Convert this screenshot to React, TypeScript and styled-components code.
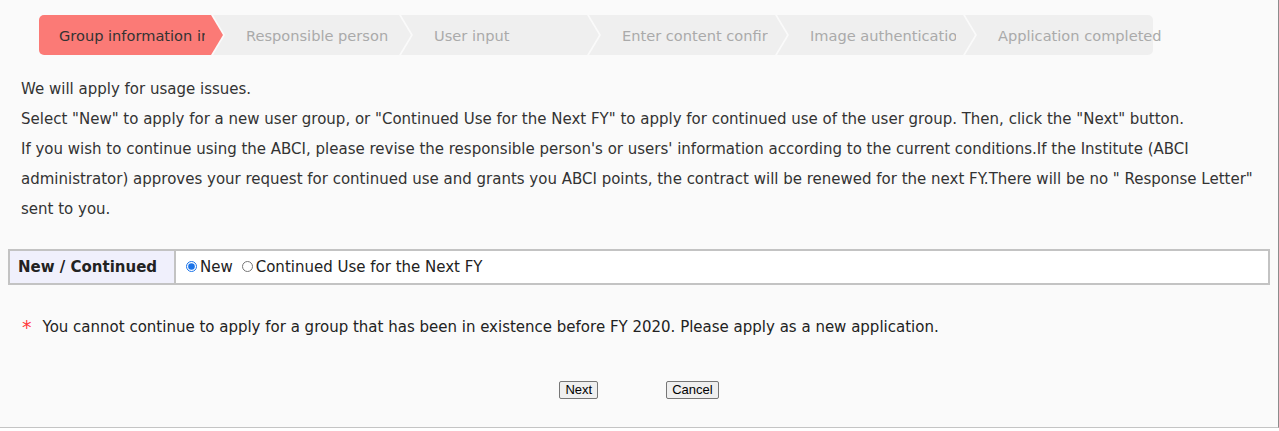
import { FC, useState } from 'react';
import styled, { createGlobalStyle } from 'styled-components';

const steps = [
	'Group information input',
	'Responsible person',
	'User input',
	'Enter content confirmation',
	'Image authentication',
	'Application completed',
];

const App: FC = () => {
	const [kind, setKind] = useState('new');

	return (
		<>
			<GlobalStyle />
			<Page>
				<StepList>
					{steps.map((label, i) => (
						<Step key={label} $index={i} $last={i === steps.length - 1} $active={i === 0}>
							<StepLabel $last={i === steps.length - 1}>{label}</StepLabel>
						</Step>
					))}
				</StepList>

				<Intro>
					<p>We will apply for usage issues.</p>
					<p>
						Select "New" to apply for a new user group, or "Continued Use for the Next FY" to apply for
						continued use of the user group. Then, click the "Next" button.
					</p>
					<p>
						If you wish to continue using the ABCI, please revise the responsible person's or users'
						information according to the current conditions.If the Institute (ABCI administrator)
						approves your request for continued use and grants you ABCI points, the contract will be
						renewed for the next FY.There will be no " Response Letter" sent to you.
					</p>
				</Intro>

				<FormTable>
					<tbody>
						<tr>
							<HeadCell>New / Continued</HeadCell>
							<ValueCell>
								<RadioLabel>
									<Radio
										type="radio"
										name="kind"
										checked={kind === 'new'}
										onChange={() => setKind('new')}
									/>
									New
								</RadioLabel>
								<RadioLabel>
									<Radio
										type="radio"
										name="kind"
										checked={kind === 'continued'}
										onChange={() => setKind('continued')}
									/>
									Continued Use for the Next FY
								</RadioLabel>
							</ValueCell>
						</tr>
					</tbody>
				</FormTable>

				<Notice>
					<Star>*</Star>
					You cannot continue to apply for a group that has been in existence before FY 2020. Please apply
					as a new application.
				</Notice>

				<ButtonRow>
					<Button>Next</Button>
					<Button>Cancel</Button>
				</ButtonRow>
			</Page>
		</>
	);
};

const GlobalStyle = createGlobalStyle`
	html, body {
		margin: 0;
		padding: 0;
		background: #ffffff;
	}
	body {
		font-family: "DejaVu Sans", Verdana, sans-serif;
		color: #333;
	}
`;

const Page = styled.div`
	box-sizing: border-box;
	width: 1279px;
	height: 428px;
	padding: 15px 8px 0;
	background: #fafafa;
	border-right: 1px solid #8c8c8c;
	border-bottom: 1px solid #c4c4c4;
`;

const StepList = styled.ol`
	display: flex;
	margin: 0 0 0 31px;
	padding: 0;
	list-style: none;
	height: 40px;
`;

const shapes = {
	first: 'polygon(0 0, calc(100% - 12px) 0, 100% 50%, calc(100% - 12px) 100%, 0 100%)',
	middle: 'polygon(0 0, calc(100% - 12px) 0, 100% 50%, calc(100% - 12px) 100%, 0 100%, 12px 50%)',
	last: 'polygon(0 0, 100% 0, 100% 100%, 0 100%, 12px 50%)',
};

const Step = styled.li<{ $index: number; $last: boolean; $active: boolean }>`
	position: relative;
	box-sizing: border-box;
	flex: none;
	display: flex;
	align-items: center;
	height: 40px;
	width: ${(p) => (p.$index === 0 ? '184px' : p.$last ? '188px' : '198px')};
	margin-left: ${(p) => (p.$index === 0 ? '0' : '-10px')};
	padding-left: ${(p) => (p.$index === 0 ? '20px' : '33px')};
	color: ${(p) => (p.$active ? '#333' : '#aaa')};
	font-size: 14.6px;

	&::before {
		content: '';
		position: absolute;
		inset: 0;
		background: ${(p) => (p.$active ? '#fb7a76' : '#efefef')};
		border-radius: ${(p) => (p.$index === 0 ? '5px 0 0 5px' : p.$last ? '0 5px 5px 0' : '0')};
		clip-path: ${(p) => (p.$index === 0 ? shapes.first : p.$last ? shapes.last : shapes.middle)};
	}
`;

const StepLabel = styled.span<{ $last: boolean }>`
	position: relative;
	display: block;
	width: ${(p) => (p.$last ? 'auto' : '146px')};
	overflow: ${(p) => (p.$last ? 'visible' : 'hidden')};
	white-space: nowrap;
`;

const Intro = styled.div`
	margin: 19px 0 0;
	padding: 0 0 0 13px;
	font-size: 15px;
	line-height: 30px;

	p {
		margin: 0;
	}
`;

const FormTable = styled.table`
	width: 100%;
	margin-top: 25px;
	border-collapse: collapse;
	border: 2px solid #c3c3c3;
	font-size: 15px;
`;

const HeadCell = styled.th`
	width: 148px;
	height: 32px;
	padding: 0 8px;
	background: #f0f0fc;
	border-right: 2px solid #c3c3c3;
	text-align: left;
	font-weight: bold;
	color: #222;
`;

const ValueCell = styled.td`
	padding: 0 9px;
	background: #ffffff;
`;

const RadioLabel = styled.label`
	display: inline-flex;
	align-items: center;
	margin-right: 8px;
	color: #222;
`;

const Radio = styled.input`
	width: 11px;
	height: 11px;
	margin: 0 3px 0 1px;
	accent-color: #1a73e8;
`;

const Notice = styled.p`
	margin: 27px 0 0;
	padding: 0 14px;
	font-size: 15px;
	line-height: 30px;
	color: #222;
`;

const Star = styled.span`
	color: #ff3b3b;
	font-size: 19px;
	margin-right: 11px;
	vertical-align: -2px;
`;

const ButtonRow = styled.div`
	display: flex;
	justify-content: center;
	gap: 68px;
	margin-top: 39px;
`;

const Button = styled.button`
	height: 18px;
	padding: 0 5px;
	font-family: "Liberation Sans", Arial, sans-serif;
	font-size: 13px;
	color: #000;
	background: #efefef;
	border: 1px solid #767676;
	border-radius: 2px;
	line-height: 14px;
`;

export default App;
